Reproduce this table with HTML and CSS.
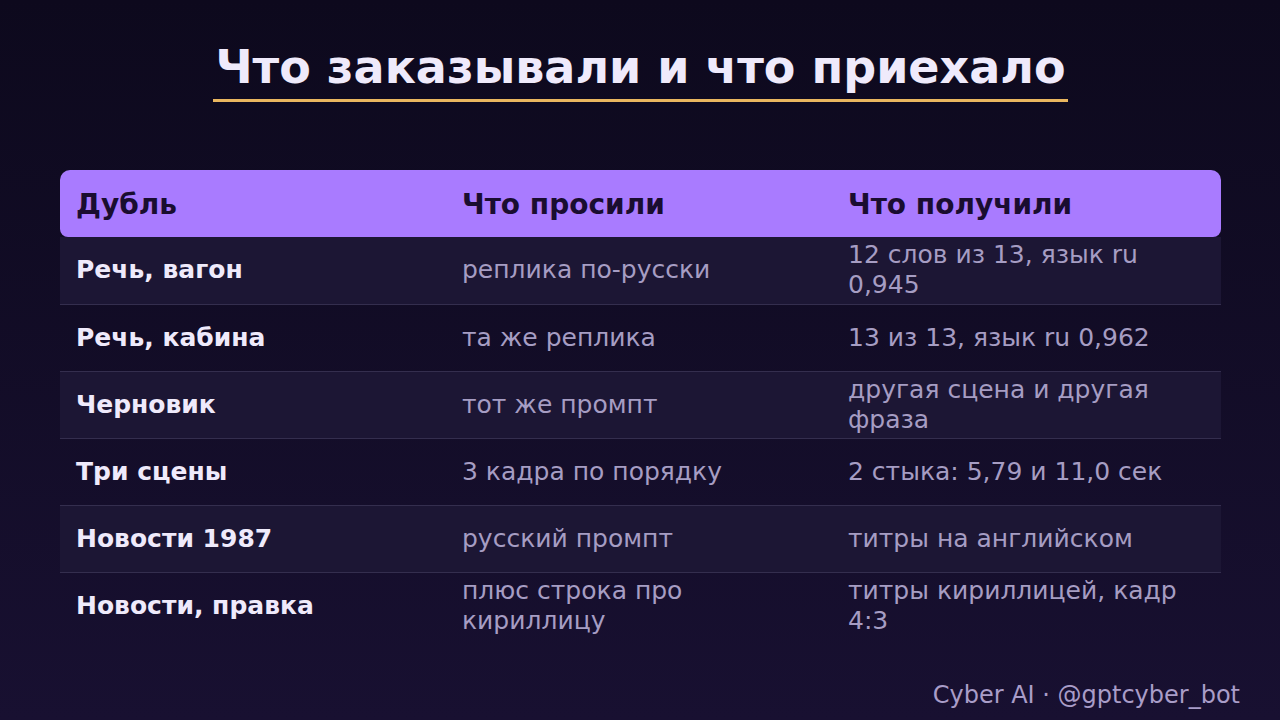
FILE: index.html
```html
<!DOCTYPE html>
<html lang="ru">
<head>
<meta charset="utf-8">
<link rel="stylesheet" href="styles.css">
</head>
<body>
<div class="page">
  <header class="title-wrap">
    <h1 class="title">Что заказывали и что приехало</h1>
  </header>
  <table class="grid">
    <colgroup>
      <col class="c1">
      <col class="c2">
      <col class="c3">
    </colgroup>
    <thead>
      <tr>
        <th>Дубль</th>
        <th>Что просили</th>
        <th>Что получили</th>
      </tr>
    </thead>
    <tbody>
      <tr><td class="name">Речь, вагон</td><td>реплика по-русски</td><td>12 слов из 13, язык ru 0,945</td></tr>
      <tr><td class="name">Речь, кабина</td><td>та же реплика</td><td>13 из 13, язык ru 0,962</td></tr>
      <tr><td class="name">Черновик</td><td>тот же промпт</td><td>другая сцена и другая фраза</td></tr>
      <tr><td class="name">Три сцены</td><td>3 кадра по порядку</td><td>2 стыка: 5,79 и 11,0 сек</td></tr>
      <tr><td class="name">Новости 1987</td><td>русский промпт</td><td>титры на английском</td></tr>
      <tr><td class="name">Новости, правка</td><td>плюс строка про кириллицу</td><td>титры кириллицей, кадр 4:3</td></tr>
    </tbody>
  </table>
  <footer class="footer">Cyber AI · @gptcyber_bot</footer>
</div>
</body>
</html>
```
FILE: styles.css
```css
html, body {
  margin: 0;
  padding: 0;
}
body {
  width: 1280px;
  height: 720px;
  overflow: hidden;
  background: linear-gradient(180deg, #0d091d 0%, #181031 100%);
  font-family: "DejaVu Sans", "Noto Sans", sans-serif;
}
.page {
  height: 720px;
  display: flex;
  flex-direction: column;
  box-sizing: border-box;
  padding: 0 59px 0 60px;
}
.title-wrap {
  display: flex;
  justify-content: center;
  padding-top: 39px;
}
.title {
  margin: 0;
  font-size: 46px;
  font-weight: bold;
  line-height: 56px;
  color: #efeafb;
  border-bottom: 3px solid #e9b65f;
  padding: 0 2px 4px;
}
.grid {
  margin-top: 68px;
  width: 100%;
  border-collapse: collapse;
  table-layout: fixed;
}
.grid col.c1,
.grid col.c2 {
  width: 386px;
}
.grid th, .grid td {
  height: 67px;
  padding: 0 16px;
  text-align: left;
  vertical-align: middle;
  font-size: 25px;
  line-height: 30px;
  box-sizing: border-box;
}
.grid th {
  background: #a97bff;
  color: #1a0d30;
  font-weight: bold;
  font-size: 28px;
  padding-top: 2px;
}
.grid th:first-child {
  border-radius: 10px 0 0 8px;
}
.grid th:last-child {
  border-radius: 0 10px 8px 0;
}
.grid td {
  color: #a69dc3;
  border-bottom: 1px solid #342e4e;
}
.grid tbody tr:nth-child(odd) td {
  background: #1c1634;
}
.grid tbody tr:last-child td {
  border-bottom: none;
}
.grid td.name {
  color: #efeafb;
  font-weight: bold;
}
.footer {
  margin-top: auto;
  padding: 0 0 10px;
  margin-right: -19px;
  text-align: right;
  font-size: 24px;
  line-height: 30px;
  color: #a99dc8;
}
```
